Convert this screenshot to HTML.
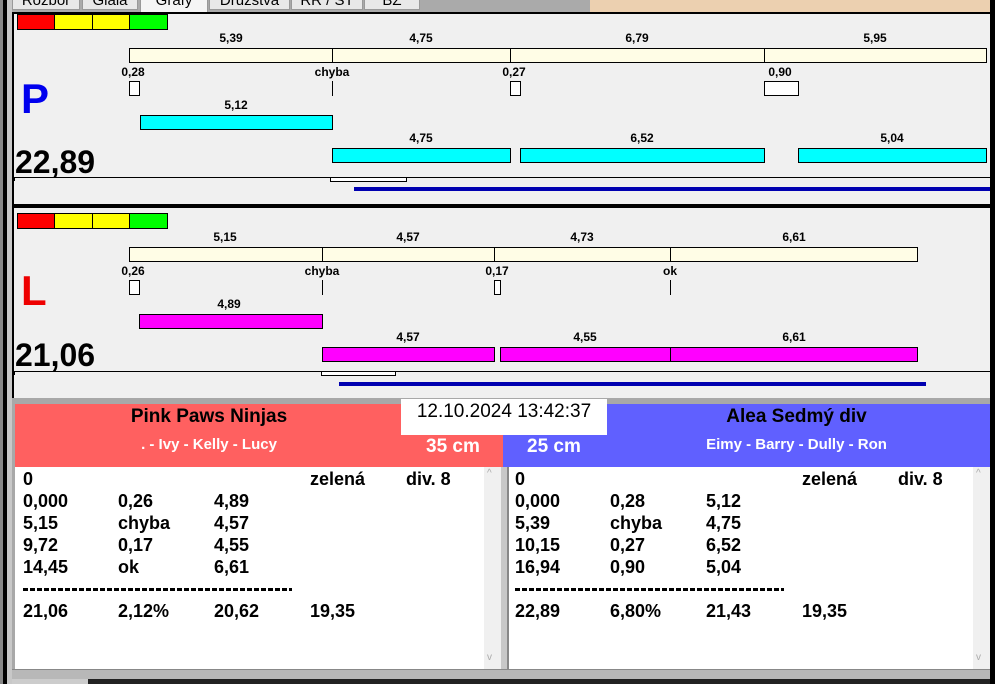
<!DOCTYPE html>
<html><head><meta charset="utf-8"><style>
*{margin:0;padding:0;box-sizing:border-box}
body{width:995px;height:684px;overflow:hidden;background:#f0f0f0;position:relative;font-family:"Liberation Sans",Arial,sans-serif;font-weight:bold;color:#000}
div{position:absolute}
.t{font-size:12px;transform:translateX(-50%);white-space:nowrap;line-height:12px}
.c{background:#fffde6;border:1px solid #000;height:15px}
.cy{background:#00ffff;border:1px solid #000;height:15px}
.mg{background:#ff00ff;border:1px solid #000;height:15px}
.bx{background:#fff;border:1px solid #000;height:15px;width:11px}
.vl{width:1px;background:#000;height:15px}
.r{font-size:18px;line-height:22px;white-space:pre}
.tab{top:-8px;height:18px;background:#e8e8e8;border:1px solid #999;font-size:15px;font-weight:normal;text-align:center;line-height:16px;color:#000}
.dash{height:3px;background:repeating-linear-gradient(90deg,#000 0 5px,transparent 5px 7px)}
</style></head><body>
<div style="left:0;top:0;width:3px;height:684px;background:#888"></div>
<div style="left:3px;top:0;width:4px;height:684px;background:#000"></div>
<div style="left:7px;top:0;width:5px;height:684px;background:#c8c8c8"></div>
<div style="left:990px;top:0;width:5px;height:684px;background:#000"></div>
<!-- tabs -->
<div style="left:12px;top:0;width:978px;height:12px;background:#aaa"></div>
<div style="left:590px;top:0;width:400px;height:12px;background:#ecd0b0"></div>
<div class="tab" style="left:12px;width:68px">Rozbor</div>
<div class="tab" style="left:82px;width:56px">Glala</div>
<div class="tab" style="left:140px;width:68px;background:#f5f5f5;border-bottom:none;height:20px">Grafy</div>
<div class="tab" style="left:209px;width:81px">Družstva</div>
<div class="tab" style="left:291px;width:72px">RR / ST</div>
<div class="tab" style="left:364px;width:56px">BZ</div>
<div style="left:12px;top:12px;width:978px;height:2px;background:#000"></div>
<div style="left:12px;top:12px;width:2px;height:392px;background:#000"></div>

<!-- Panel P -->
<div style="left:17px;top:14px;width:38px;height:16px;background:#f00;border:1px solid #000"></div>
<div style="left:54px;top:14px;width:39px;height:16px;background:#ff0;border:1px solid #000"></div>
<div style="left:92px;top:14px;width:38px;height:16px;background:#ff0;border:1px solid #000"></div>
<div style="left:129px;top:14px;width:39px;height:16px;background:#0f0;border:1px solid #000"></div>
<div class="t" style="left:231px;top:32px">5,39</div>
<div class="t" style="left:421px;top:32px">4,75</div>
<div class="t" style="left:637px;top:32px">6,79</div>
<div class="t" style="left:875px;top:32px">5,95</div>
<div class="c" style="left:129px;top:48px;width:858px"></div>
<div class="vl" style="left:332px;top:48px"></div>
<div class="vl" style="left:510px;top:48px"></div>
<div class="vl" style="left:764px;top:48px"></div>
<div class="t" style="left:133px;top:66px">0,28</div>
<div class="t" style="left:332px;top:66px">chyba</div>
<div class="t" style="left:514px;top:66px">0,27</div>
<div class="t" style="left:780px;top:66px">0,90</div>
<div class="bx" style="left:129px;top:81px"></div>
<div class="vl" style="left:332px;top:81px"></div>
<div class="bx" style="left:510px;top:81px"></div>
<div class="bx" style="left:764px;top:81px;width:35px"></div>
<div style="left:21px;top:76px;font-size:42px;color:#0000ee;line-height:46px">P</div>
<div class="t" style="left:236px;top:99px">5,12</div>
<div class="cy" style="left:140px;top:115px;width:193px"></div>
<div class="t" style="left:421px;top:132px">4,75</div>
<div class="t" style="left:642px;top:132px">6,52</div>
<div class="t" style="left:892px;top:132px">5,04</div>
<div class="cy" style="left:332px;top:148px;width:179px"></div>
<div class="cy" style="left:520px;top:148px;width:245px"></div>
<div class="cy" style="left:798px;top:148px;width:189px"></div>
<div style="left:15px;top:143px;font-size:32px;line-height:38px">22,89</div>
<div style="left:13px;top:177px;width:977px;height:1px;background:#000"></div>
<div style="left:14px;top:177px;width:1px;height:4px;background:#000"></div>
<div style="left:330px;top:177px;width:77px;height:5px;background:#fff;border:1px solid #000"></div>
<div style="left:354px;top:187px;width:636px;height:4px;background:#0000b0"></div>
<div style="left:12px;top:204px;width:978px;height:4px;background:#000"></div>

<!-- Panel L -->
<div style="left:17px;top:213px;width:38px;height:16px;background:#f00;border:1px solid #000"></div>
<div style="left:54px;top:213px;width:39px;height:16px;background:#ff0;border:1px solid #000"></div>
<div style="left:92px;top:213px;width:38px;height:16px;background:#ff0;border:1px solid #000"></div>
<div style="left:129px;top:213px;width:39px;height:16px;background:#0f0;border:1px solid #000"></div>
<div class="t" style="left:225px;top:231px">5,15</div>
<div class="t" style="left:408px;top:231px">4,57</div>
<div class="t" style="left:582px;top:231px">4,73</div>
<div class="t" style="left:794px;top:231px">6,61</div>
<div class="c" style="left:129px;top:247px;width:789px"></div>
<div class="vl" style="left:322px;top:247px"></div>
<div class="vl" style="left:494px;top:247px"></div>
<div class="vl" style="left:670px;top:247px"></div>
<div class="t" style="left:133px;top:265px">0,26</div>
<div class="t" style="left:322px;top:265px">chyba</div>
<div class="t" style="left:497px;top:265px">0,17</div>
<div class="t" style="left:670px;top:265px">ok</div>
<div class="bx" style="left:129px;top:280px"></div>
<div class="vl" style="left:322px;top:280px"></div>
<div class="bx" style="left:494px;top:280px;width:7px"></div>
<div class="vl" style="left:670px;top:280px"></div>
<div style="left:21px;top:268px;font-size:42px;color:#ee0000;line-height:46px">L</div>
<div class="t" style="left:229px;top:298px">4,89</div>
<div class="mg" style="left:139px;top:314px;width:184px"></div>
<div class="t" style="left:408px;top:331px">4,57</div>
<div class="t" style="left:585px;top:331px">4,55</div>
<div class="t" style="left:794px;top:331px">6,61</div>
<div class="mg" style="left:322px;top:347px;width:173px"></div>
<div class="mg" style="left:500px;top:347px;width:171px"></div>
<div class="mg" style="left:670px;top:347px;width:248px"></div>
<div style="left:15px;top:336px;font-size:32px;line-height:38px">21,06</div>
<div style="left:13px;top:371px;width:977px;height:1px;background:#000"></div>
<div style="left:14px;top:371px;width:1px;height:4px;background:#000"></div>
<div style="left:321px;top:371px;width:75px;height:5px;background:#fff;border:1px solid #000"></div>
<div style="left:339px;top:382px;width:587px;height:4px;background:#0000b0"></div>

<!-- bottom -->
<div style="left:12px;top:398px;width:978px;height:6px;background:#a8a8a8"></div>
<div style="left:12px;top:404px;width:3px;height:266px;background:#a8a8a8"></div>
<div style="left:15px;top:404px;width:488px;height:63px;background:#ff6060"></div>
<div style="left:503px;top:404px;width:487px;height:63px;background:#6060ff"></div>
<div style="left:15px;top:404px;width:488px;text-align:center;font-size:19px;line-height:26px;padding-right:100px">Pink Paws Ninjas</div>
<div style="left:15px;top:434px;width:488px;text-align:center;font-size:15px;color:#fff;line-height:22px;padding-right:100px">. - Ivy - Kelly - Lucy</div>
<div style="left:426px;top:435px;font-size:19px;color:#fff;line-height:24px">35 cm</div>
<div style="left:527px;top:435px;font-size:19px;color:#fff;line-height:24px">25 cm</div>
<div style="left:503px;top:404px;width:487px;text-align:center;font-size:19px;line-height:26px;padding-left:100px">Alea Sedmý div</div>
<div style="left:503px;top:434px;width:487px;text-align:center;font-size:15px;color:#fff;line-height:22px;padding-left:100px">Eimy - Barry - Dully - Ron</div>
<div style="left:401px;top:399px;width:206px;height:36px;background:#fff;font-weight:normal;font-size:19px;text-align:center;line-height:26px">12.10.2024 13:42:37</div>

<div style="left:15px;top:467px;width:486px;height:202px;background:#fff"></div>
<div style="left:484px;top:467px;width:17px;height:202px;background:#f0f0f0"></div>
<div style="left:501px;top:467px;width:7px;height:202px;background:#c8c8c8"></div>
<div style="left:507px;top:467px;width:2px;height:202px;background:#888"></div>
<div style="left:509px;top:467px;width:481px;height:202px;background:#fff"></div>
<div style="left:973px;top:467px;width:17px;height:202px;background:#f0f0f0"></div>
<div style="left:487px;top:468px;font-size:10px;color:#aaa;font-weight:normal">^</div>
<div style="left:487px;top:652px;font-size:10px;color:#aaa;font-weight:normal">v</div>
<div style="left:976px;top:468px;font-size:10px;color:#aaa;font-weight:normal">^</div>
<div style="left:976px;top:652px;font-size:10px;color:#aaa;font-weight:normal">v</div>

<div class="r" style="left:23px;top:468px">0</div><div class="r" style="left:310px;top:468px">zelená</div><div class="r" style="left:406px;top:468px">div. 8</div>
<div class="r" style="left:23px;top:490px">0,000</div><div class="r" style="left:118px;top:490px">0,26</div><div class="r" style="left:214px;top:490px">4,89</div>
<div class="r" style="left:23px;top:512px">5,15</div><div class="r" style="left:118px;top:512px">chyba</div><div class="r" style="left:214px;top:512px">4,57</div>
<div class="r" style="left:23px;top:534px">9,72</div><div class="r" style="left:118px;top:534px">0,17</div><div class="r" style="left:214px;top:534px">4,55</div>
<div class="r" style="left:23px;top:556px">14,45</div><div class="r" style="left:118px;top:556px">ok</div><div class="r" style="left:214px;top:556px">6,61</div>
<div class="dash" style="left:23px;top:588px;width:269px"></div>
<div class="r" style="left:23px;top:600px">21,06</div><div class="r" style="left:118px;top:600px">2,12%</div><div class="r" style="left:214px;top:600px">20,62</div><div class="r" style="left:310px;top:600px">19,35</div>

<div class="r" style="left:515px;top:468px">0</div><div class="r" style="left:802px;top:468px">zelená</div><div class="r" style="left:898px;top:468px">div. 8</div>
<div class="r" style="left:515px;top:490px">0,000</div><div class="r" style="left:610px;top:490px">0,28</div><div class="r" style="left:706px;top:490px">5,12</div>
<div class="r" style="left:515px;top:512px">5,39</div><div class="r" style="left:610px;top:512px">chyba</div><div class="r" style="left:706px;top:512px">4,75</div>
<div class="r" style="left:515px;top:534px">10,15</div><div class="r" style="left:610px;top:534px">0,27</div><div class="r" style="left:706px;top:534px">6,52</div>
<div class="r" style="left:515px;top:556px">16,94</div><div class="r" style="left:610px;top:556px">0,90</div><div class="r" style="left:706px;top:556px">5,04</div>
<div class="dash" style="left:515px;top:588px;width:269px"></div>
<div class="r" style="left:515px;top:600px">22,89</div><div class="r" style="left:610px;top:600px">6,80%</div><div class="r" style="left:706px;top:600px">21,43</div><div class="r" style="left:802px;top:600px">19,35</div>

<div style="left:12px;top:669px;width:978px;height:10px;background:#b8b8b8;border-top:1px solid #888"></div>
<div style="left:88px;top:679px;width:902px;height:5px;background:#222"></div>
<div style="left:12px;top:679px;width:76px;height:5px;background:#ccc"></div>
</body></html>
